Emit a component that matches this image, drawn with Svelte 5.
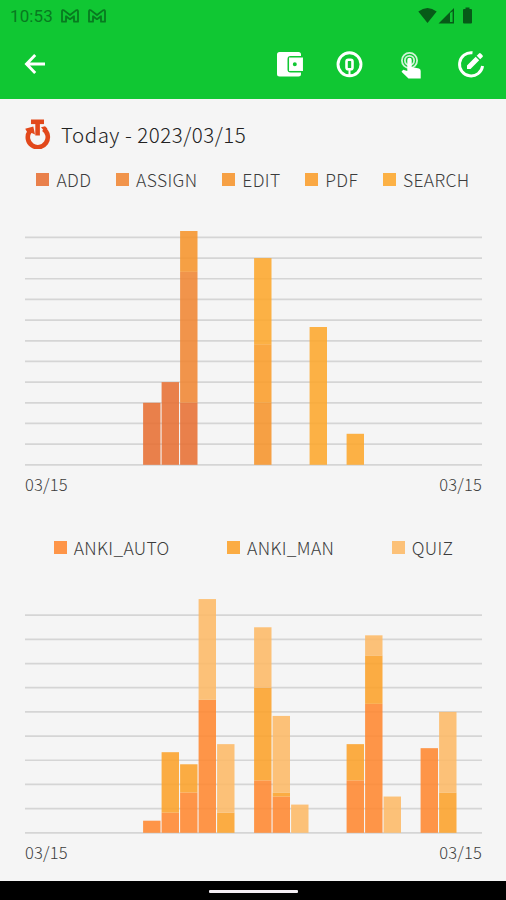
<script lang="ts">
  type Series = { name: string; color: string };
  type Bar = { slot: number; values: number[] };
  type Chart = {
    id: string;
    series: Series[];
    bars: Bar[];
    height: number;
    unit: number;
    lines: number;
  };

  const charts: Chart[] = [
    {
      id: "edits",
      series: [
        { name: "ADD", color: "#e77033" },
        { name: "ASSIGN", color: "#f08633" },
        { name: "EDIT", color: "#f6942b" },
        { name: "PDF", color: "#fb9d2a" },
        { name: "SEARCH", color: "#fda72c" },
      ],
      bars: [
        { slot: 0, values: [18, 0, 0, 0, 0] },
        { slot: 1, values: [24, 0, 0, 0, 0] },
        { slot: 2, values: [18, 38, 12, 0, 0] },
        { slot: 6, values: [0, 0, 18, 17, 25] },
        { slot: 9, values: [0, 0, 0, 0, 40] },
        { slot: 11, values: [0, 0, 0, 0, 9] },
      ],
      height: 236,
      unit: 3.445,
      lines: 12,
    },
    {
      id: "reviews",
      series: [
        { name: "ANKI_AUTO", color: "#ff8730" },
        { name: "ANKI_MAN", color: "#fca22a" },
        { name: "QUIZ", color: "#fdb967" },
      ],
      bars: [
        { slot: 0, values: [3, 0, 0] },
        { slot: 1, values: [5, 15, 0] },
        { slot: 2, values: [10, 7, 0] },
        { slot: 3, values: [33, 0, 25] },
        { slot: 4, values: [0, 5, 17] },
        { slot: 6, values: [13, 23, 15] },
        { slot: 7, values: [9, 1, 19] },
        { slot: 8, values: [0, 0, 7] },
        { slot: 11, values: [13, 9, 0] },
        { slot: 12, values: [32, 12, 5] },
        { slot: 13, values: [0, 0, 9] },
        { slot: 15, values: [21, 0, 0] },
        { slot: 16, values: [0, 10, 20] },
      ],
      height: 236,
      unit: 4.03,
      lines: 10,
    },
  ];

  const WIDTH = 457;
  const PITCH = 18.5;
  const BAR = 17.4;
  const FIRST = 118.1;
  const STEP = 6;

  // stack the values of every bar upwards from the base line
  function segments(chart: Chart) {
    const base = chart.height - 2.2;
    return chart.bars.flatMap((bar) => {
      let total = 0;
      return bar.values.map((value, i) => {
        total += value;
        return {
          x: FIRST + bar.slot * PITCH,
          y: base - total * chart.unit,
          h: value * chart.unit,
          color: chart.series[i].color,
        };
      });
    }).filter((s) => s.h > 0);
  }
</script>

<main class="screen">
  <header>
    <div class="status">
      <div class="status-left">
        <span class="clock">10:53</span>
        {#each [0, 1] as n (n)}
          <svg class="mail" width="18" height="14" viewBox="0 0 18 14">
            <path d="M1 12.7V2.3Q1.2.5 3 1.4L9 6l6-4.6q1.800-.9 2 .9v10.400h-4V7.200L9 10.200 5 7.200v5.500z" />
          </svg>
        {/each}
      </div>
      <svg class="system" width="56" height="18" viewBox="0 0 56 18">
        <path d="M.3 4.500Q9.500-2.700 18.700 4.500L9.500 16z" />
        <path d="M36 1v15.500H20.500zm-4 5v9h2.600V4.200z" fill-rule="evenodd" />
        <path d="M45 3q0-1 1-1h1.500V.5h4V2H53q1 0 1 1v12.500q0 1-1 1h-7q-1 0-1-1z" />
      </svg>
    </div>
    <nav>
      <button aria-label="Back">
        <svg width="34" height="34" viewBox="0 0 34 34">
          <path class="line" d="M27 17H9M17.200 8 8.500 17l8.700 9" />
        </svg>
      </button>
      <div class="actions">
        <button aria-label="Wallet">
          <svg width="34" height="34" viewBox="0 0 34 34">
            <path d="M6.500 5h19q2.500 0 2.500 2.500V9H17.500q-3 0-3 3v10.500q0 3 3 3H28V27q0 2.500-2.500 2.500h-19Q4 29.500 4 27V7.500Q4 5 6.500 5z" />
            <path fill-rule="evenodd" d="M16 10.500h14v13.500H16zm2 2v9.500h10v-9.500z" opacity=".95" />
            <path fill-rule="evenodd" d="M17 11.500h12v11.500H17zM21.800 15.300a2 2 0 1 0 0 4 2 2 0 1 0 0-4z" />
          </svg>
        </button>
        <button aria-label="Records">
          <svg width="34" height="34" viewBox="0 0 34 34">
            <circle class="line" cx="16.500" cy="17.300" r="11.500" />
            <rect class="line inner" x="13.500" y="12.700" width="6" height="9.600" rx="1.800" />
            <path class="line thin" d="M16.500 22v6" />
          </svg>
        </button>
        <button aria-label="Touch">
          <svg width="34" height="34" viewBox="0 0 34 34">
            <circle class="line ring" cx="15.500" cy="13.500" r="7.600" />
            <circle class="line ring" cx="15.500" cy="13.500" r="4.600" />
            <path d="M13.300 13q0-2.200 2.200-2.200t2.200 2.200v7l7.300 1.500q1.800.6 1.700 2.500V31.500H14.500l-7-6.700 1.700-2.100 4.100 1.300z" />
          </svg>
        </button>
        <button aria-label="Edit">
          <svg width="34" height="34" viewBox="0 0 34 34">
            <path class="line" d="M18.500 5.800A11.600 11.600 0 1 0 28.600 19" />
            <path d="m13 18.500 8.700-8.700 3.500 3.500-8.700 8.700H13zm9.700-9.700 2.300-2.300q.9-.9 1.800 0l1.700 1.700q.9.9 0 1.800l-2.300 2.300z" />
          </svg>
        </button>
      </div>
    </nav>
  </header>

  <section class="content">
    <h1>
      <svg width="26" height="30" viewBox="0 0 26 30">
        <path class="timer" d="M4.600 12.500A10 10 0 1 0 18.500 10" />
        <path class="timer" d="M6 2.800h13" />
        <path class="timer" d="M12.600 2.500v14" />
        <path class="tip" d="M.2 9.800 8.300 7.500l1.700 8-3.200-1.500-3.500 1z" />
        <path class="tip" d="m16 8.300 4-1.100 2.400 2.200-2.500 3.400z" />
      </svg>
      Today - 2023/03/15
    </h1>

    {#each charts as chart (chart.id)}
      <article class={chart.id}>
        <ul class="legend">
          {#each chart.series as item (item.name)}
            <li><i style="background: {item.color}"></i>{item.name}</li>
          {/each}
        </ul>
        <svg class="plot" width={WIDTH} height={chart.height} viewBox="0 0 {WIDTH} {chart.height}">
          {#each Array(chart.lines) as _, i}
            <line
              x1="0"
              x2={WIDTH}
              y1={chart.height - 2.2 - i * STEP * chart.unit}
              y2={chart.height - 2.2 - i * STEP * chart.unit}
            />
          {/each}
          {#each segments(chart) as s}
            <rect class="bar" x={s.x} y={s.y} width={BAR} height={s.h} fill={s.color} />
          {/each}
        </svg>
        <div class="dates"><span>03/15</span><span>03/15</span></div>
      </article>
    {/each}
  </section>

  <footer><div class="handle"></div></footer>
</main>

<style>
  :global(body) {
    margin: 0;
  }

  .screen {
    width: 506px;
    height: 900px;
    display: flex;
    flex-direction: column;
    overflow: hidden;
    background: #f5f5f5;
    color: #3c3c3c;
    font-family: "Noto Sans CJK JP", "Noto Sans", sans-serif;
    font-weight: 300;
  }

  header {
    height: 98.5px;
    box-sizing: border-box;
    flex: none;
    background: #10c733;
  }

  .status {
    height: 32px;
    display: flex;
    justify-content: space-between;
    padding: 0 34px 0 10px;
    box-sizing: border-box;
  }

  .status-left {
    display: flex;
    align-items: center;
  }

  .clock {
    width: 51px;
    font: 400 17px/32px Roboto, sans-serif;
    letter-spacing: 0.1px;
    color: #087a20;
  }

  .mail {
    margin-right: 9px;
    fill: none;
    stroke: #087a20;
    stroke-width: 1.8;
    stroke-linejoin: round;
  }

  .system {
    margin: 6.5px -1.5px 0 0;
    fill: #075a18;
  }

  nav {
    display: flex;
    justify-content: space-between;
    padding: 15px 18px 0 18px;
  }

  .actions {
    display: flex;
    gap: 26.5px;
  }

  button {
    display: block;
    width: 34px;
    height: 34px;
    padding: 0;
    border: 0;
    background: none;
  }

  button svg {
    display: block;
    fill: #fff;
  }

  .line {
    fill: none;
    stroke: #fff;
    stroke-width: 2.9;
  }

  .inner {
    stroke-width: 2.6;
  }

  .thin {
    stroke-width: 2;
  }

  .ring {
    stroke-width: 1.8;
    opacity: 0.8;
  }

  .content {
    flex: 1;
    padding: 0 24px 0 25px;
  }

  h1 {
    display: flex;
    align-items: center;
    gap: 10px;
    height: 34px;
    margin: 18.5px 0 0;
    font-size: 20.5px;
    font-weight: 300;
    letter-spacing: 0.5px;
    color: #222;
    white-space: nowrap;
  }

  .timer {
    fill: none;
    stroke: #e2481b;
    stroke-width: 4.6;
  }

  .tip {
    fill: #e2481b;
  }

  .legend {
    display: flex;
    justify-content: space-around;
    height: 24px;
    margin: 0 0 0 -1px;
    padding: 0;
    list-style: none;
  }

  .legend li {
    display: flex;
    align-items: center;
    font-size: 17.5px;
    letter-spacing: 0.35px;
    white-space: nowrap;
  }

  .legend i {
    width: 13px;
    height: 13px;
    margin-right: 7px;
    opacity: 0.88;
  }

  .edits {
    padding-top: 16px;
  }

  .reviews {
    padding-top: 37px;
  }

  .reviews .legend {
    margin-left: 0;
  }

  .plot {
    display: block;
    margin-top: 39.5px;
  }

  .dates {
    display: flex;
    justify-content: space-between;
    height: 30px;
    margin-top: 2px;
    line-height: 30px;
    font-size: 16.5px;
    letter-spacing: 0.2px;
  }

  .plot line {
    stroke: #d5d5d5;
    stroke-width: 1.7;
  }

  .bar {
    opacity: 0.88;
  }

  footer {
    flex: none;
    height: 19px;
    display: flex;
    justify-content: center;
    align-items: center;
    background: #000;
  }

  .handle {
    width: 89px;
    height: 3px;
    margin-top: 2px;
    border-radius: 1px;
    background: #f3eef3;
  }
</style>
